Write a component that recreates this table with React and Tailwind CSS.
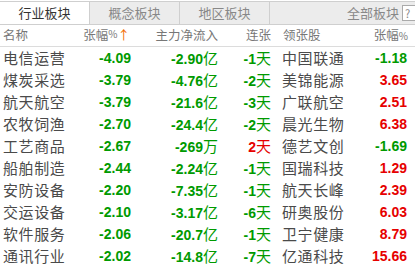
const rows = [
  ['电信运营', '-4.09', '-2.90亿', '-1天', '中国联通', '-1.18'],
  ['煤炭采选', '-3.79', '-4.76亿', '-2天', '美锦能源', '3.65'],
  ['航天航空', '-3.79', '-21.6亿', '-3天', '广联航空', '2.51'],
  ['农牧饲渔', '-2.70', '-24.4亿', '-2天', '晨光生物', '6.38'],
  ['工艺商品', '-2.67', '-269万', '2天', '德艺文创', '-1.69'],
  ['船舶制造', '-2.44', '-2.24亿', '-1天', '国瑞科技', '1.29'],
  ['安防设备', '-2.20', '-7.35亿', '-1天', '航天长峰', '2.39'],
  ['交运设备', '-2.10', '-3.17亿', '-6天', '研奥股份', '6.03'],
  ['软件服务', '-2.06', '-20.7亿', '-1天', '卫宁健康', '8.79'],
  ['通讯行业', '-2.02', '-14.8亿', '-7天', '亿通科技', '15.66'],
]

const tone = (v) => (v.startsWith('-') ? 'text-[#009a00]' : 'text-[#e60000]')

const cjk = "font-['Noto_Sans_CJK_SC',sans-serif]"
const num = "font-['Liberation_Sans','Noto_Sans_CJK_SC',sans-serif] font-bold text-[14px]"

export default function App() {
  return (
    <div className={`h-[268px] w-[415px] overflow-hidden whitespace-nowrap bg-white ${cjk}`}>
      {/* tab strip */}
      <div className="mt-px flex h-[24px] overflow-hidden border-y border-[#cfcfcf] text-[13px] leading-[22px]">
        <div className="w-[89px] shrink-0 bg-white text-center text-[#333]">行业板块</div>
        <div className="w-[90px] shrink-0 border-l border-[#cfcfcf] bg-[#ececec] text-center text-[#888]">概念板块</div>
        <div className="w-[90px] shrink-0 border-l border-[#cfcfcf] bg-[#ececec] text-center text-[#888]">地区板块</div>
        <div className="flex flex-1 items-center justify-end border-l border-[#cfcfcf] bg-[#ececec] text-[#888]">
          <span className="mr-[3px]">全部板块</span>
          <span className="-mr-[4px] flex h-[16px] w-[17px] shrink-0 items-center pl-[2px] border border-[#aaa] bg-white text-[11px] leading-none text-[#888]">?</span>
        </div>
      </div>

      {/* column header */}
      <div className="flex h-[22px] items-center overflow-hidden border-b border-[#dcdcdc] text-[12.5px] text-[#777]">
        <div className="w-[80px] shrink-0 pl-[3px]">名称</div>
        <div className="flex w-[50px] shrink-0 justify-end">
          张幅<span className="text-[10px]">%</span>
          <span className="text-[#f26b00]">↑</span>
        </div>
        <div className="w-[88px] shrink-0 text-right">主力净流入</div>
        <div className="w-[53px] shrink-0 text-right">连张</div>
        <div className="flex-1 pl-[12px]">领张股</div>
        <div className="w-[60px] shrink-0 pr-[7px] text-right">
          张幅<span className="text-[10px]">%</span>
        </div>
      </div>

      {rows.map(([name, pct, flow, streak, leader, lpct]) => (
        <div key={name} className="flex h-[22px] items-center">
          <div className="w-[80px] shrink-0 pl-[3px] text-[15px] tracking-[0.6px] text-[#4a4a4a]">{name}</div>
          <div className={`w-[51px] shrink-0 text-right ${num} ${tone(pct)}`}>{pct}</div>
          <div className={`w-[87px] shrink-0 text-right ${num} ${tone(flow)}`}>
            {flow.slice(0, -1)}
            <span className={`${cjk} text-[15px] font-normal`}>{flow.slice(-1)}</span>
          </div>
          <div className={`w-[53px] shrink-0 text-right ${num} ${tone(streak)}`}>
            {streak.slice(0, -1)}
            <span className={`${cjk} text-[15px] font-normal`}>天</span>
          </div>
          <div className="flex-1 pl-[11px] text-[15px] tracking-[0.6px] text-[#4a4a4a]">{leader}</div>
          <div className={`w-[60px] shrink-0 pr-[8px] text-right ${num} ${tone(lpct)}`}>{lpct}</div>
        </div>
      ))}
    </div>
  )
}
